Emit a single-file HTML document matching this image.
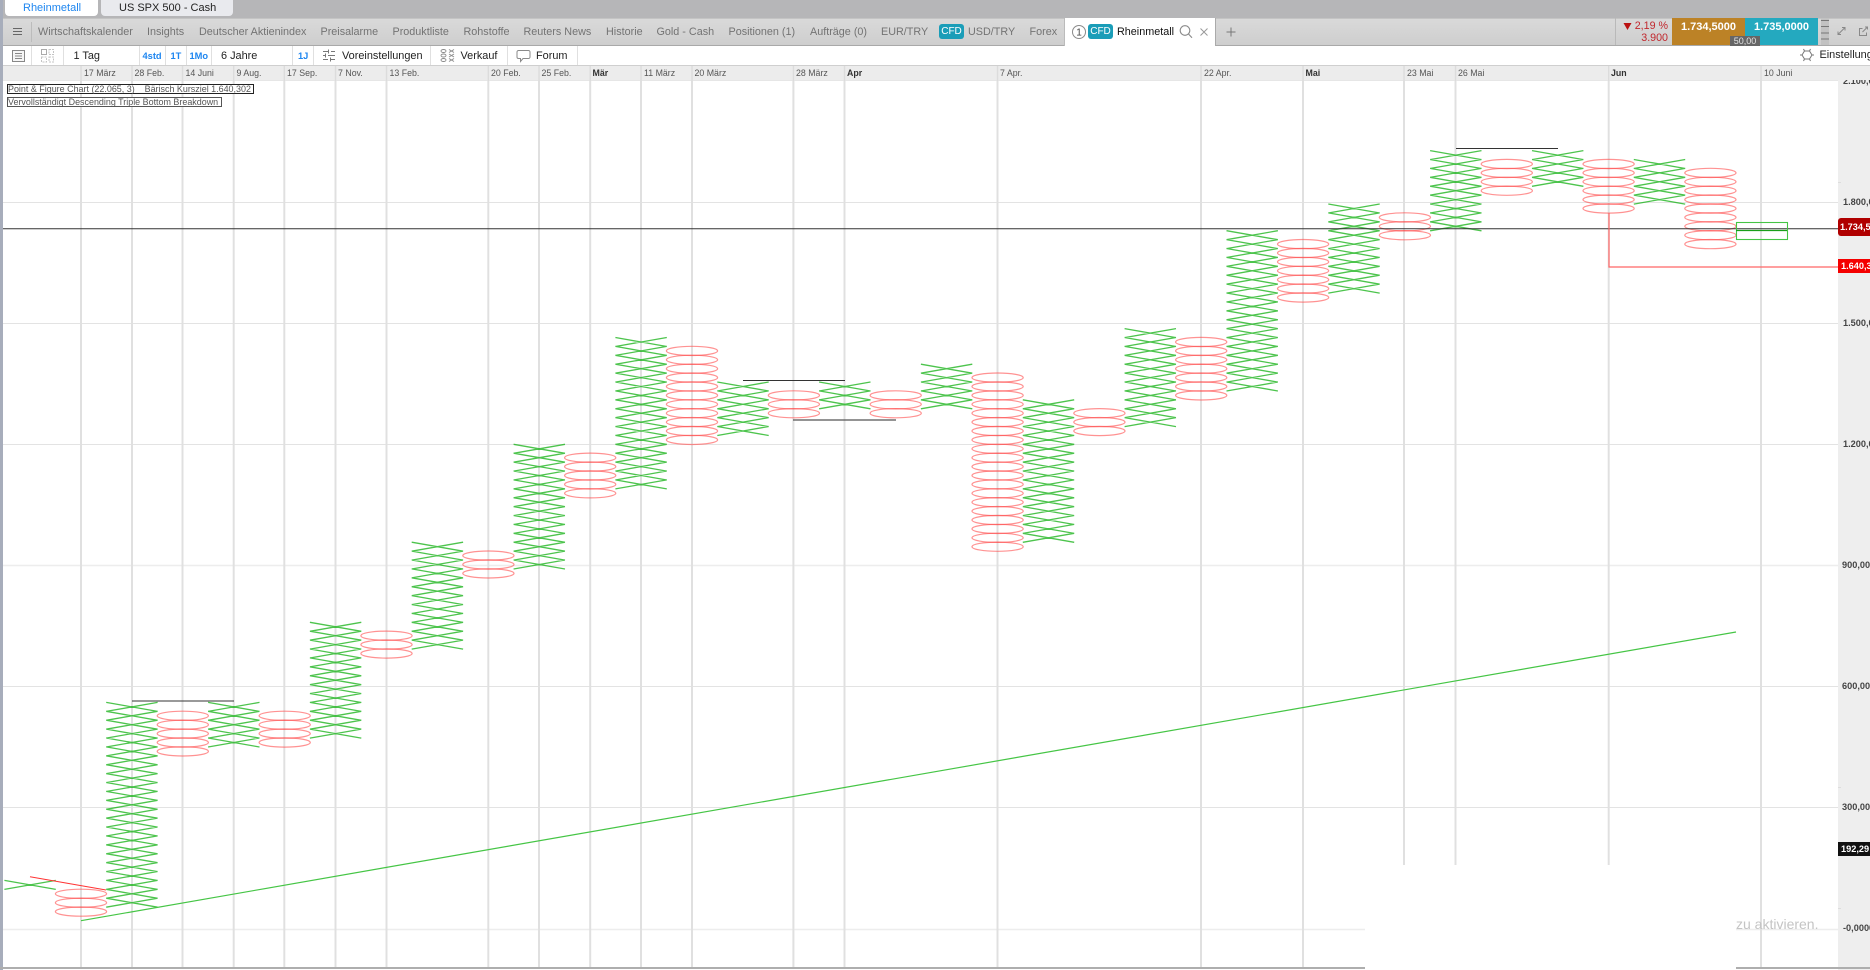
<!DOCTYPE html>
<html><head><meta charset="utf-8"><title>Rheinmetall</title>
<style>
html,body{margin:0;padding:0;background:#fff}
body{width:1870px;height:970px;position:relative;overflow:hidden;font-family:"Liberation Sans",sans-serif;color:#333;filter:blur(.3px)}
.a{position:absolute}
.t{position:absolute;white-space:nowrap}
.n{font-size:10.8px;color:#737373;top:25.5px;line-height:13px}
.b{font-size:10.9px;color:#222;top:50px;line-height:13px}
.bl{font-size:9.3px;color:#1e86f0;top:50px;line-height:13px;font-weight:bold}
.h{font-size:8.8px;color:#555;top:67px;line-height:12px}
.hb{font-weight:bold;color:#333}
.y{font-size:9.2px;font-weight:bold;color:#444;left:1843px;line-height:12px;width:27px;overflow:hidden}
.s{position:absolute;width:1px;background:#e0e0e0}
.cfd{position:absolute;background:#1a9db8;color:#fff;border-radius:3px;font-size:10px;text-align:center;line-height:15px;height:15px;width:25px}
.px{position:absolute;color:#fff;font-weight:bold;font-size:9.2px;left:1838px;width:32px;overflow:hidden;white-space:nowrap;padding-left:2px;box-sizing:border-box}
</style></head><body>

<svg class="a" id="c" style="left:0;top:0" width="1870" height="970" viewBox="0 0 1870 970">
<defs><clipPath id="cl"><rect x="3" y="80" width="1835" height="890"/></clipPath></defs>
<rect x="1838" y="80" width="32" height="890" fill="#eeeeee"/>
<g stroke="#e3e3e3" stroke-width="1">
<path d="M3 202.5H1838M3 323.5H1838M3 444.5H1838M3 686.5H1838M3 807.5H1838"/>
<path d="M3 565.5H1838M3 929.5H1838" stroke="#ededed" stroke-width="1.4"/>
</g>
<path stroke="#e0e0e0" stroke-width="2" fill="none" d="M81 80V968M132 80V968M182.500 80V968M233.700 80V968M284.300 80V968M335.500 80V968M386.500 80V968M488.300 80V968M539 80V968M590.200 80V968M641 80V968M692 80V968M793.400 80V968M844.500 80V968M997.500 80V968M1201 80V968M1303 80V968M1404 80V968M1455.500 80V968M1608.700 80V968M1761 80V968"/>
<rect x="1365" y="865" width="371" height="105" fill="#fff"/>
<g id="pf" clip-path="url(#cl)"></g>
<g fill="none">
<path d="M3 228.700H1838" stroke="#333" stroke-width="1"/>
<path d="M81 920.700L1736 632" stroke="#45c545" stroke-width="1.2"/>
<path d="M30 876.700L106 890" stroke="#f33" stroke-width="1"/>
<path d="M1609 213V267H1838" stroke="#f66" stroke-width="1.2"/>
<path d="M132 701H234M1456 148.500H1558M743 380.500H845" stroke="#333" stroke-width="1"/>
<path d="M793 420H896" stroke="#555" stroke-width="1.2"/>
<rect x="1736.500" y="222.500" width="51" height="17" stroke="#45c545" stroke-width="1.1"/>
<path d="M1736 230.500H1787" stroke="#1a9f1a" stroke-width="1.2"/>
<path d="M1838 182.500h3M1838 787.500h3M1838 908.500h3" stroke="#ddd"/>
</g>
</svg>

<!-- bottom and left edges -->
<div class="a" style="left:0;top:0;width:2.500px;height:970px;background:#a7adbb"></div>
<div class="a" style="left:0;top:967px;width:1365px;height:2px;background:#aeaeae"></div>
<div class="a" style="left:1736px;top:967px;width:134px;height:2px;background:#aeaeae"></div>

<!-- axis -->
<div class="a" style="left:1843px;top:80px;width:27px;height:7px;overflow:hidden"><span class="t y" style="left:0;top:-5px">2.100,00</span></div>
<span class="t y" style="top:196px">1.800,00</span>
<span class="t y" style="top:316.500px">1.500,00</span>
<span class="t y" style="top:438px">1.200,00</span>
<span class="t y" style="top:559px;left:1842px;width:28px">900,00</span>
<span class="t y" style="top:680px;left:1842px;width:28px">600,00</span>
<span class="t y" style="top:801px;left:1842px;width:28px">300,00</span>
<span class="t y" style="top:922px">-0,0000</span>
<div class="px" style="top:218px;height:18px;line-height:19px;background:#b00000;border-radius:3px 0 0 3px;padding-left:2px">1.734,50</div>
<div class="px" style="top:259px;height:14px;line-height:14px;background:#f40000;padding-left:3px">1.640,30</div>
<div class="px" style="top:842px;height:14px;line-height:14px;background:#111;padding-left:3px">192,29</div>

<span class="t" style="left:1736px;top:915px;font-size:14px;line-height:18px;color:#c4c4c4">zu aktivieren.</span>

<!-- top grey strip -->
<div class="a" style="left:0;top:0;width:1870px;height:18px;background:#b6b6b8"></div>
<div class="a" style="left:0;top:0;width:2.500px;height:46px;background:#a7adbb"></div>
<div class="a" style="left:5px;top:0;width:93px;height:16px;background:#fff;border-radius:0 0 4px 4px"></div>
<div class="a" style="left:101px;top:0;width:132px;height:16px;background:#e9eaee;border-radius:0 0 4px 4px"></div>
<span class="t" style="left:23px;top:1px;font-size:11px;line-height:14px;color:#1e86f0">Rheinmetall</span>
<span class="t" style="left:119px;top:1px;font-size:11px;line-height:14px;color:#222">US SPX 500 - Cash</span>

<!-- nav row -->
<div class="a" style="left:3px;top:18px;width:1867px;height:28px;background:linear-gradient(#d9d9d9,#cecece);border-top:1px solid #c4c4c4;border-bottom:1px solid #a9a9a9;box-sizing:border-box"></div>
<div class="a" style="left:13px;top:27.500px;width:9px;height:1.500px;background:#666"></div>
<div class="a" style="left:13px;top:30.500px;width:9px;height:1.500px;background:#666"></div>
<div class="a" style="left:13px;top:33.500px;width:9px;height:1.500px;background:#666"></div>
<div class="s" style="left:31px;top:22px;height:20px;background:#bcbcbc"></div>
<span class="t n" style="left:38px">Wirtschaftskalender</span>
<span class="t n" style="left:147px">Insights</span>
<span class="t n" style="left:199px">Deutscher Aktienindex</span>
<span class="t n" style="left:320.500px">Preisalarme</span>
<span class="t n" style="left:392.500px">Produktliste</span>
<span class="t n" style="left:463.500px">Rohstoffe</span>
<span class="t n" style="left:523.500px">Reuters News</span>
<span class="t n" style="left:606px">Historie</span>
<span class="t n" style="left:656.500px">Gold - Cash</span>
<span class="t n" style="left:728.500px">Positionen (1)</span>
<span class="t n" style="left:810px">Aufträge (0)</span>
<span class="t n" style="left:881px">EUR/TRY</span>
<div class="cfd" style="left:939px;top:24px">CFD</div>
<span class="t n" style="left:968px">USD/TRY</span>
<span class="t n" style="left:1029.500px">Forex</span>

<div class="a" style="left:1064px;top:18px;width:152px;height:28px;background:#fff;border-left:1px solid #bbb;border-right:1px solid #aaa;box-sizing:border-box"></div>
<svg class="a" style="left:1071px;top:24px" width="16" height="16"><circle cx="8" cy="8" r="6.500" fill="none" stroke="#8a8a8a"/><text x="8" y="11.500" font-size="10" text-anchor="middle" fill="#444" font-family="Liberation Sans">1</text></svg>
<div class="cfd" style="left:1088px;top:23.500px">CFD</div>
<span class="t" style="left:1117px;top:25.500px;font-size:10.8px;line-height:13px;color:#111">Rheinmetall</span>
<svg class="a" style="left:1179px;top:24px" width="14" height="15" fill="none" stroke="#8a8a8a" stroke-width="1.1"><circle cx="6" cy="6.500" r="4.800"/><path d="M9.500 10l3.500 3.800"/></svg>
<svg class="a" style="left:1199px;top:27px" width="10" height="10" stroke="#999" stroke-width="1"><path d="M1.500 1.500l7 7M8.500 1.500l-7 7"/></svg>
<svg class="a" style="left:1225px;top:26px" width="12" height="12" stroke="#777" stroke-width="1"><path d="M6 1.500v9M1.500 6h9"/></svg>

<!-- prices -->
<div class="s" style="left:1615px;top:18px;height:27px;background:#b9b9b9"></div>
<svg class="a" style="left:1623px;top:22px" width="9" height="9"><path d="M.5 1H8.500L4.500 8Z" fill="#b11"/></svg>
<span class="t" style="left:1633px;top:20px;width:35px;text-align:right;font-size:10.700px;line-height:13px;color:#c1272d">2,19 %</span>
<span class="t" style="left:1633px;top:32px;width:35px;text-align:right;font-size:10.700px;line-height:13px;color:#c1272d">3.900</span>
<div class="a" style="left:1672px;top:18px;width:73px;height:27px;background:#bc8226"></div>
<div class="a" style="left:1745px;top:18px;width:73px;height:27px;background:#24a9bf"></div>
<span class="t" style="left:1672px;top:20px;width:73px;text-align:center;font-size:11px;font-weight:bold;line-height:14px;color:#fff">1.734,5000</span>
<span class="t" style="left:1745px;top:20px;width:73px;text-align:center;font-size:11px;font-weight:bold;line-height:14px;color:#fff">1.735,0000</span>
<div class="a" style="left:1730px;top:36px;width:30px;height:10px;background:#666;color:#e4e4e4;font-size:9px;line-height:10px;text-align:center">50,00</div>
<svg class="a" style="left:1818px;top:18px" width="52" height="28" fill="none" stroke="#777">
<rect x="3" y="0" width="8" height="27" fill="#c2c2c2" stroke="none"/>
<path d="M3 2.500H11M3 8.500H11M3 15H11M3 21H11" stroke-width="1"/>
<path d="M20 16.500l7-7M24 9.500h3v3M20 13.500v3h3" stroke="#888"/>
<path d="M44.500 10.500h-3v7h7v-3M44.500 14l5-5M47 9h2.500v2.500" stroke="#888"/>
</svg>

<!-- toolbar -->
<div class="a" style="left:3px;top:46px;width:1867px;height:20px;background:#fff;border-bottom:1px solid #cfcfcf;box-sizing:border-box"></div>
<svg class="a" style="left:11px;top:48px" width="46" height="15" fill="none">
<rect x="1.500" y="2.500" width="12" height="11" stroke="#888" fill="#f6f6f6"/>
<path d="M4 5.500h7M4 8h7M4 10.500h7" stroke="#888"/>
<path d="M30.500 1.500h5v5h-5z" stroke="#aaa"/>
<path d="M38 1.500h4.500v5H38zM30.500 9h5v5h-5zM38 9h4.500v5H38z" stroke="#c4c4c4" stroke-dasharray="2 1"/>
</svg>
<div class="s" style="left:31px;top:46px;height:19px"></div>
<div class="s" style="left:62.500px;top:46px;height:19px"></div>
<div class="s" style="left:139px;top:46px;height:19px"></div>
<div class="s" style="left:165px;top:46px;height:19px"></div>
<div class="s" style="left:185.500px;top:46px;height:19px"></div>
<div class="s" style="left:211px;top:46px;height:19px"></div>
<div class="s" style="left:292px;top:46px;height:19px"></div>
<div class="s" style="left:313px;top:46px;height:19px"></div>
<div class="s" style="left:430px;top:46px;height:19px"></div>
<div class="s" style="left:506.500px;top:46px;height:19px"></div>
<div class="s" style="left:576.500px;top:46px;height:19px"></div>
<span class="t b" style="left:73.500px">1 Tag</span>
<span class="t bl" style="left:142.500px">4std</span>
<span class="t bl" style="left:170.500px">1T</span>
<span class="t bl" style="left:189.500px">1Mo</span>
<span class="t b" style="left:221px">6 Jahre</span>
<span class="t bl" style="left:298px">1J</span>
<svg class="a" style="left:323px;top:48px" width="13" height="15" stroke="#777" fill="none"><path d="M0 3.500h5M8 3.500h4M0 7.500h2M5 7.500h7M0 11.500h5M8 11.500h4M5.500 1.500v4M2.500 5.500v4M7.500 9.500v4"/></svg>
<span class="t b" style="left:342px">Voreinstellungen</span>
<svg class="a" style="left:440px;top:48px" width="15" height="15" stroke="#8a8a8a" fill="none" stroke-width=".9"><ellipse cx="3.500" cy="3" rx="2.500" ry="1.500"/><ellipse cx="3.500" cy="7.500" rx="2.500" ry="1.500"/><ellipse cx="3.500" cy="12" rx="2.500" ry="1.500"/><path d="M9 1.500l5 3M14 1.500l-5 3M9 6l5 3M14 6l-5 3M9 10.500l5 3M14 10.500l-5 3"/></svg>
<span class="t b" style="left:460.500px">Verkauf</span>
<svg class="a" style="left:516px;top:48px" width="15" height="15" stroke="#8a8a8a" fill="none"><path d="M2.500 2.500h10a1.500 1.500 0 0 1 1.500 1.500v5a1.500 1.500 0 0 1-1.500 1.500H7l-2.500 3v-3h-2A1.500 1.500 0 0 1 1 9V4a1.500 1.500 0 0 1 1.500-1.500z"/></svg>
<span class="t b" style="left:536px">Forum</span>
<svg class="a" style="left:1800px;top:48px" width="14" height="14" stroke="#777" fill="none"><path d="M4.500 3h5l2.500 4-2.500 4h-5L2 7z"/><path d="M0 7h2M12 7h2M3.500 1l1 2M10.500 1l-1 2M3.500 13l1-2M10.500 13l-1-2"/></svg>
<span class="t" style="left:1819.500px;top:49px;font-size:10.9px;line-height:13px;color:#222;width:50.500px;overflow:hidden">Einstellungen</span>

<!-- date header -->
<div class="a" style="left:3px;top:66px;width:1867px;height:13.500px;background:#ececec"></div>
<div class="a" style="left:3px;top:79.500px;width:1835px;height:1.500px;background:#e6e6e6"></div>
<svg class="a" style="left:0;top:66px" width="1870" height="15"><path stroke="#dcdcdc" stroke-width="1.400" fill="none" d="M81 0V15M132 0V15M182.500 0V15M233.700 0V15M284.300 0V15M335.500 0V15M386.500 0V15M488.300 0V15M539 0V15M590.200 0V15M641 0V15M692 0V15M793.400 0V15M844.500 0V15M997.500 0V15M1201 0V15M1303 0V15M1404 0V15M1455.500 0V15M1608.700 0V15M1761 0V15"/></svg>
<span class="t h" style="left:84px">17 März</span>
<span class="t h" style="left:134.500px">28 Feb.</span>
<span class="t h" style="left:185.500px">14 Juni</span>
<span class="t h" style="left:236.500px">9 Aug.</span>
<span class="t h" style="left:287px">17 Sep.</span>
<span class="t h" style="left:338px">7 Nov.</span>
<span class="t h" style="left:389.500px">13 Feb.</span>
<span class="t h" style="left:491px">20 Feb.</span>
<span class="t h" style="left:541.500px">25 Feb.</span>
<span class="t h hb" style="left:592.500px">Mär</span>
<span class="t h" style="left:644px">11 März</span>
<span class="t h" style="left:694.500px">20 März</span>
<span class="t h" style="left:796px">28 März</span>
<span class="t h hb" style="left:847px">Apr</span>
<span class="t h" style="left:1000px">7 Apr.</span>
<span class="t h" style="left:1204px">22 Apr.</span>
<span class="t h hb" style="left:1305.500px">Mai</span>
<span class="t h" style="left:1407px">23 Mai</span>
<span class="t h" style="left:1458px">26 Mai</span>
<span class="t h hb" style="left:1611px">Jun</span>
<span class="t h" style="left:1764px">10 Juni</span>

<!-- legend boxes -->
<div class="t" style="left:7px;top:83.500px;width:247px;height:10px;box-sizing:border-box;border:1px solid #222;background:#fff;font-size:8.950px;line-height:8px;color:#555;padding-left:0;white-space:pre">Point &amp; Figure Chart (22.065, 3)    Bärisch Kursziel 1.640,302</div>
<div class="t" style="left:7px;top:97px;width:215px;height:10px;box-sizing:border-box;border:1px solid #555;background:#fff;font-size:8.950px;line-height:8px;color:#555;padding-left:0">Vervollständigt Descending Triple Bottom Breakdown</div>

<script>
var d=[[-1,'X',2,2],[0,'O',1,-1],[1,'X',22,0],[2,'O',21,17],[3,'X',22,18],[4,'O',21,18],[5,'X',31,19],[6,'O',30,28],[7,'X',40,29],[8,'O',39,37],[9,'X',51,38],[10,'O',50,46],[11,'X',63,47],[12,'O',62,52],[13,'X',58,53],[14,'O',57,55],[15,'X',58,56],[16,'O',57,55],[17,'X',60,56],[18,'O',59,40],[19,'X',56,41],[20,'O',55,53],[21,'X',64,54],[22,'O',63,57],[23,'X',75,58],[24,'O',74,68],[25,'X',78,69],[26,'O',77,75],[27,'X',84,76],[28,'O',83,80],[29,'X',84,81],[30,'O',83,78],[31,'X',83,79],[32,'O',82,74]];
var p='',e='';
d.forEach(function(c){
  var x=81+50.92*c[0];
  for(var r=c[3];r<=c[2];r++){
    var y=902.7-8.9*r;
    if(c[1]=='X'){
      p+='M'+(x-25.7).toFixed(1)+' '+(y-4.5).toFixed(1)+'L'+(x+25.7).toFixed(1)+' '+(y+4.5).toFixed(1)+'M'+(x+25.7).toFixed(1)+' '+(y-4.5).toFixed(1)+'L'+(x-25.7).toFixed(1)+' '+(y+4.5).toFixed(1);
    }else{
      e+='<ellipse cx="'+x.toFixed(1)+'" cy="'+y.toFixed(1)+'" rx="25.6" ry="4.6"/>';
    }
  }
});
document.getElementById('pf').innerHTML='<g fill="none" stroke="#ff4a4a" stroke-opacity=".6" stroke-width="1.2"><!-- O -->'+e+'</g><path d="'+p+'" fill="none" stroke="#12b012" stroke-opacity=".75" stroke-width="1.3"/>';
</script>
</body></html>
